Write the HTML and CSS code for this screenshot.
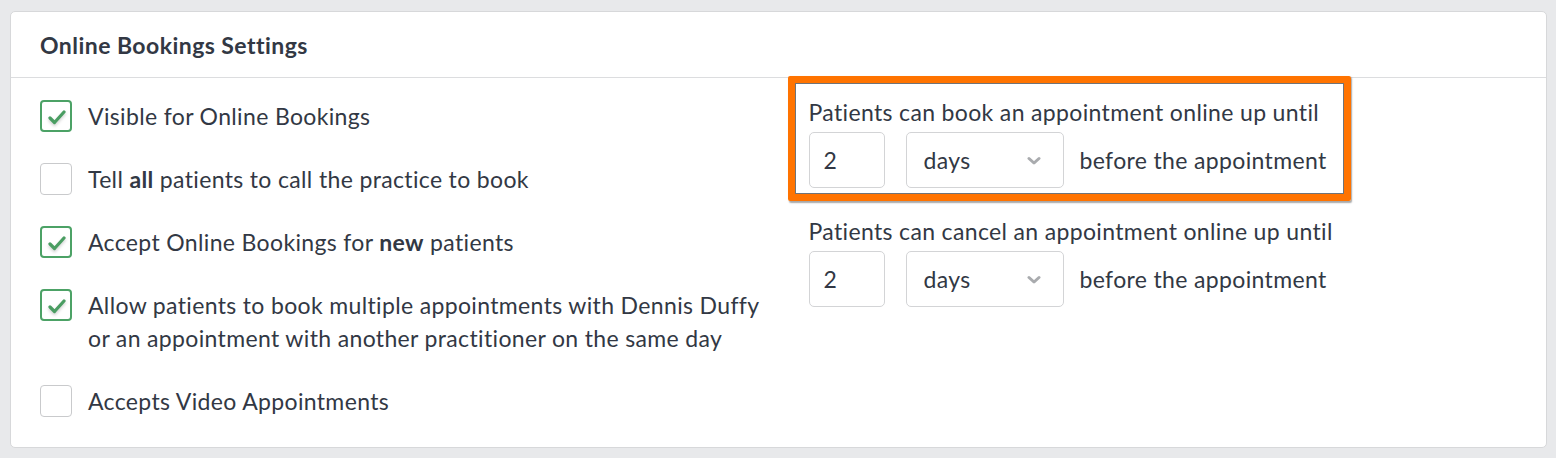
FILE: index.html
```html
<!DOCTYPE html>
<html lang="en">
<head>
<meta charset="utf-8">
<title>Online Bookings Settings</title>
<link rel="stylesheet" href="styles.css">
</head>
<body>
<section class="card">
  <header class="card-header">Online Bookings Settings</header>
  <div class="card-body">
    <div class="col col-left">
      <label class="opt">
        <span class="box checked"><svg viewBox="0 0 32 32" width="32" height="32"><path d="M10 18 L14.5 22.5 L24 12" fill="none" stroke="#4a9d62" stroke-width="3.2" stroke-linecap="round" stroke-linejoin="round"/></svg></span>
        <span class="opt-text">Visible for Online Bookings</span>
      </label>
      <label class="opt">
        <span class="box"></span>
        <span class="opt-text">Tell <b>all</b> patients to call the practice to book</span>
      </label>
      <label class="opt">
        <span class="box checked"><svg viewBox="0 0 32 32" width="32" height="32"><path d="M10 18 L14.5 22.5 L24 12" fill="none" stroke="#4a9d62" stroke-width="3.2" stroke-linecap="round" stroke-linejoin="round"/></svg></span>
        <span class="opt-text">Accept Online Bookings for <b>new</b> patients</span>
      </label>
      <label class="opt">
        <span class="box checked"><svg viewBox="0 0 32 32" width="32" height="32"><path d="M10 18 L14.5 22.5 L24 12" fill="none" stroke="#4a9d62" stroke-width="3.2" stroke-linecap="round" stroke-linejoin="round"/></svg></span>
        <span class="opt-text">Allow patients to book multiple appointments with Dennis Duffy<br>or an appointment with another practitioner on the same day</span>
      </label>
      <label class="opt">
        <span class="box"></span>
        <span class="opt-text">Accepts Video Appointments</span>
      </label>
    </div>
    <div class="col col-right">
      <div class="group highlighted">
        <div class="group-label">Patients can book an appointment online up until</div>
        <div class="group-row">
          <span class="num">2</span>
          <span class="select">days<svg class="chev" viewBox="0 0 14 10" width="14" height="10"><path d="M2 2.5 L7 7 L12 2.5" fill="none" stroke="#a9abae" stroke-width="3" stroke-linecap="round" stroke-linejoin="round"/></svg></span>
          <span class="after">before the appointment</span>
        </div>
      </div>
      <div class="group">
        <div class="group-label">Patients can cancel an appointment online up until</div>
        <div class="group-row">
          <span class="num">2</span>
          <span class="select">days<svg class="chev" viewBox="0 0 14 10" width="14" height="10"><path d="M2 2.5 L7 7 L12 2.5" fill="none" stroke="#a9abae" stroke-width="3" stroke-linecap="round" stroke-linejoin="round"/></svg></span>
          <span class="after">before the appointment</span>
        </div>
      </div>
    </div>
  </div>
</section>
</body>
</html>
```
FILE: styles.css
```css
html, body {
  margin: 0;
  padding: 0;
  background: #e8e9eb;
}
body {
  padding: 11px 9px 10px 10px;
  font-family: Lato, "Open Sans", sans-serif;
  color: #323844;
}
.card {
  background: #fff;
  border: 1px solid #d7d8da;
  border-radius: 5px;
  height: 437px;
  box-sizing: border-box;
}
.card-header {
  height: 66px;
  box-sizing: border-box;
  border-bottom: 1px solid #dcdddf;
  padding: 0 29px;
  display: flex;
  align-items: center;
  font-size: 23px;
  letter-spacing: 0.45px;
  font-weight: 700;
  color: #323844;
}
.card-body {
  display: grid;
  grid-template-columns: 1fr 1fr;
}
.col {
  padding: 0 29px 0 29px;
}
.col-left {
  padding-top: 22px;
  padding-right: 0;
  display: flex;
  flex-direction: column;
  gap: 30px;
}
.col-right {
  padding-left: 30px;
  padding-top: 18px;
}
.opt {
  display: flex;
  align-items: flex-start;
  gap: 16px;
  font-size: 23px;
  letter-spacing: 0.35px;
  line-height: 33px;
}
.opt-text {
  white-space: nowrap;
}
.opt-text b { font-weight: 700; }
.box {
  flex: none;
  width: 32px;
  height: 32px;
  box-sizing: border-box;
  border: 1px solid #c9cacc;
  border-radius: 4px;
  background: #fff;
  position: relative;
}
.box.checked {
  border: 2px solid #4ca266;
}
.box svg {
  position: absolute;
  left: -2px;
  top: -2px;
  filter: drop-shadow(0 2px 1.5px rgba(0,0,0,0.18));
}
.group {
  font-size: 23px;
  letter-spacing: 0.35px;
}
.group + .group {
  margin-top: 27px;
}
.group-label {
  line-height: 32px;
  white-space: nowrap;
}
.group-row {
  margin-top: 4px;
  display: flex;
  align-items: center;
}
.num {
  width: 76px;
  height: 56px;
  box-sizing: border-box;
  border: 1px solid #d3d4d6;
  border-radius: 5px;
  padding-left: 14px;
  display: flex;
  align-items: center;
}
.select {
  margin-left: 21px;
  width: 158px;
  height: 56px;
  box-sizing: border-box;
  border: 1px solid #d3d4d6;
  border-radius: 5px;
  padding: 0 22px 0 17px;
  display: flex;
  align-items: center;
  justify-content: space-between;
}
.chev { margin-top: 1px; }
.after {
  margin-left: 16px;
  white-space: nowrap;
}
.highlighted {
  position: relative;
}
.highlighted::after {
  content: "";
  position: absolute;
  left: -21px;
  top: -20px;
  width: 563px;
  height: 125px;
  box-sizing: border-box;
  border: 7px solid #ff7300;
  border-radius: 2px;
  box-shadow: inset 0 0 0 1px #6f7378, 1px 1.5px 1.5px rgba(0,0,0,0.35);
  pointer-events: none;
}
```
